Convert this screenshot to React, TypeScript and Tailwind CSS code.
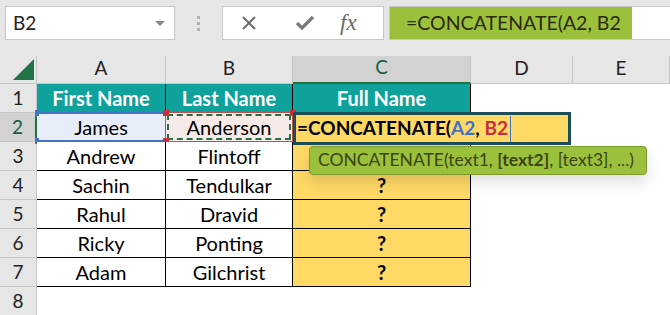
import React from 'react';

const font = { fontFamily: 'Lato, "Liberation Sans", sans-serif' };

// C3 sits under the function tooltip, so its "?" is never seen
const rows = [
  ['First Name', 'Last Name', 'Full Name'],
  ['James', 'Anderson', ''],
  ['Andrew', 'Flintoff', ''],
  ['Sachin', 'Tendulkar', '?'],
  ['Rahul', 'Dravid', '?'],
  ['Ricky', 'Ponting', '?'],
  ['Adam', 'Gilchrist', '?'],
];

function Handle({ className }: { className: string }) {
  return <div className={`absolute w-[6px] h-[6px] ${className}`} />;
}

export default function App() {
  return (
    <div className="w-[670px] h-[315px] overflow-hidden bg-white relative" style={font}>
      {/* formula bar */}
      <div className="h-[56px] bg-[#e6e6e6] flex items-start pt-[6px]">
        <div className="ml-[5px] w-[170px] h-[34px] bg-white border border-[#c6c6c6] flex items-center pl-[7px] pr-[9px]">
          <span className="text-[19px] text-[#222] flex-1">B2</span>
          <span className="w-0 h-0 border-l-[5px] border-r-[5px] border-t-[5px] border-l-transparent border-r-transparent border-t-[#888]" />
        </div>
        <div className="w-[47px] h-[34px] flex flex-col items-center justify-center gap-[3px]">
          <span className="w-[3px] h-[3px] bg-[#b0b0b0]" />
          <span className="w-[3px] h-[3px] bg-[#b0b0b0]" />
          <span className="w-[3px] h-[3px] bg-[#b0b0b0]" />
        </div>
        <div className="w-[162px] h-[34px] bg-white border border-[#c6c6c6] flex items-center">
          <svg width="16" height="16" viewBox="0 0 16 16" className="ml-[18px]">
            <path d="M2 2 L14 14 M14 2 L2 14" stroke="#6b6b6b" strokeWidth="2" fill="none" />
          </svg>
          <svg width="20" height="16" viewBox="0 0 20 16" className="ml-[38px]">
            <path d="M2 8 L7 13 L18 2" stroke="#7a7a7a" strokeWidth="3.2" fill="none" />
          </svg>
          <span className="ml-[25px] text-[23px] italic text-[#6b6b6b]" style={{ fontFamily: '"Liberation Serif", serif' }}>
            fx
          </span>
        </div>
        <div className="ml-[5px] flex-1 h-[34px] bg-white border-y border-l border-[#c6c6c6] flex">
          <div className="w-[242px] h-full bg-[#9bc13c] flex items-center pl-[16px] text-[19.5px] text-[#2a2a10]">
            =CONCATENATE(A2, B2
          </div>
        </div>
      </div>

      {/* grid */}
      <div className="grid grid-cols-[37px_129px_127px_178px_102px_1fr] grid-rows-[28px_29px_29px_29px_29px_29px_29px_29px_29px]">
        <div className="bg-[#e6e6e6] border-r border-b border-[#c6c6c6] relative">
          <svg width="22" height="22" viewBox="0 0 22 22" className="absolute left-[13px] top-[3px]">
            <path d="M21 0 L21 21 L0 21 Z" fill="#217346" />
          </svg>
        </div>
        {['A', 'B', 'C', 'D', 'E'].map((c) => (
          <div
            key={c}
            className={`flex items-end justify-center pb-[1px] text-[19px] border-r border-[#c6c6c6] ${
              c === 'C' ? 'bg-[#d2d2d2] text-[#155c45] border-b-2 border-b-[#217346]' : 'bg-[#e6e6e6] text-[#222] border-b border-b-[#c6c6c6]'
            }`}
          >
            {c}
          </div>
        ))}

        {Array.from({ length: 8 }).map((_, r) => {
          const data = rows[r];
          const num = r + 1;
          return (
            <React.Fragment key={r}>
              <div
                className={`flex items-center justify-center text-[19px] border-b border-[#c6c6c6] ${
                  num === 2 ? 'bg-[#d2d2d2] text-[#155c45] border-r-2 border-r-[#217346]' : 'bg-[#e6e6e6] text-[#222] border-r border-r-[#c6c6c6]'
                }`}
              >
                {num}
              </div>
              {data ? (
                data.map((v, i) => {
                  let cls = 'bg-white text-black';
                  if (num === 1) cls = 'bg-[#0fa19b] text-white font-bold';
                  else if (i === 2) cls = 'bg-[#ffd966] text-black font-bold';
                  else if (num === 2 && i === 0) cls = 'bg-[#e8eef9] text-black';
                  else if (num === 2 && i === 1) cls = 'bg-[#f9eaea] text-black';
                  return (
                    <div
                      key={i}
                      className={`relative flex items-center justify-center text-[20px] border-r border-b border-black ${cls}`}
                    >
                      {v}
                      {num === 2 && i === 0 && (
                        <>
                          <div className="absolute inset-x-0 top-[-1px] h-[2px] bg-[#4472c4]" />
                          <div className="absolute inset-x-0 bottom-[-1px] h-[2px] bg-[#4472c4]" />
                          <Handle className="left-[-2px] top-[-3px] !w-[4px] bg-[#4472c4]" />
                          <Handle className="left-[-2px] bottom-[-3px] !w-[4px] bg-[#4472c4]" />
                        </>
                      )}
                      {num === 2 && i === 1 && (
                        <>
                          <div className="absolute inset-[-1px] border border-[#c0504d]" />
                          <div className="absolute inset-[1px] border-2 border-dashed border-[#217346]" />
                          <Handle className="left-[-3px] top-[-3px] bg-[#c7303c]" />
                          <Handle className="left-[-3px] bottom-[-3px] bg-[#c7303c]" />
                          <Handle className="right-[-4px] top-[-3px] bg-[#c7303c]" />
                        </>
                      )}
                    </div>
                  );
                })
              ) : (
                <>
                  <div className="bg-white" />
                  <div className="bg-white" />
                  <div className="bg-white" />
                </>
              )}
              <div className="bg-white" />
              <div className="bg-white" />
            </React.Fragment>
          );
        })}
      </div>

      {/* in-cell editor */}
      <div className="absolute left-[293px] top-[112px] w-[278px] h-[33px] border-[3px] border-[#1d4e58] bg-[#ffd966] flex items-center pl-[1px] text-[19px] font-bold text-black">
        <span>=CONCATENATE(</span>
        <span className="text-[#4472c4]">A2</span>
        <span>,&nbsp;</span>
        <span className="text-[#c7303c]">B2</span>
        <span className="w-px h-[26px] bg-[#4472c4] ml-[2px]" />
      </div>

      {/* function tooltip */}
      <div className="absolute left-[309px] top-[146px] w-[338px] h-[29px] bg-[#9bc13c] border border-[#7c9a2c] rounded-[4px] shadow-[0_8px_14px_rgba(0,0,0,0.12)] flex items-center pl-[8px] text-[17.5px] text-[#3a4514] whitespace-nowrap">
        <span>CONCATENATE(text1,&nbsp;</span>
        <b>[text2]</b>
        <span>, [text3], ...)</span>
      </div>
    </div>
  );
}
